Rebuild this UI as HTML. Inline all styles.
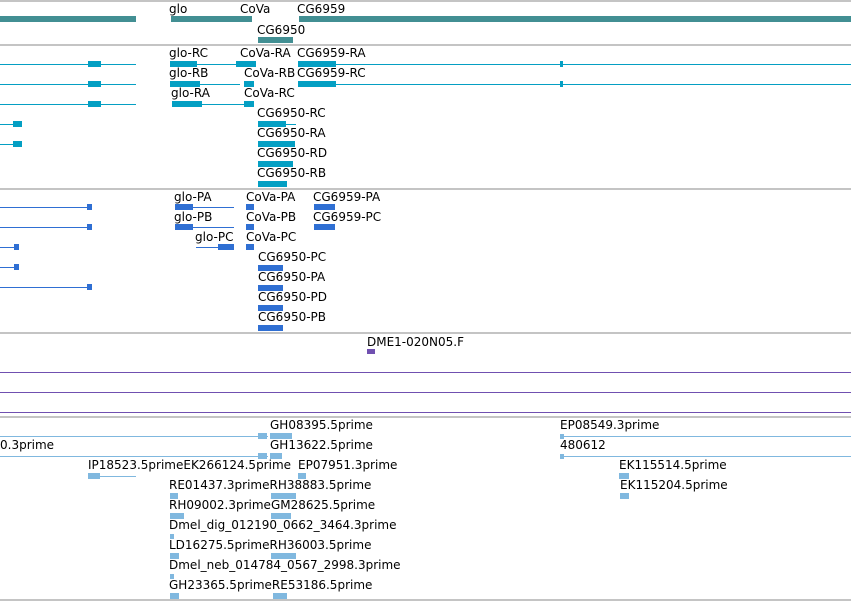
<!DOCTYPE html>
<html><head><meta charset="utf-8"><style>
body{margin:0;width:851px;height:601px;background:#fff;position:relative;overflow:hidden;font-family:"DejaVu Sans","Liberation Sans",sans-serif;font-size:12px;color:#000}
div{position:absolute}
.s{left:0;width:851px;height:2px;background:#c4c4c4}
.p{left:0;width:851px;height:1px;background:#7050b0}
.t{line-height:14px;white-space:nowrap}
.a{background:#428f93}
.c{background:#049fc3}
.d{background:#2f6fd3}
.e{background:#80b8df}
</style></head><body>
<div class="s" style="top:0"></div>
<div class="s" style="top:44px"></div>
<div class="s" style="top:188px"></div>
<div class="s" style="top:332px"></div>
<div class="s" style="top:416px"></div>
<div class="s" style="top:599px"></div>
<div class="p" style="top:372px"></div>
<div class="p" style="top:392px"></div>
<div class="p" style="top:412px"></div>

<!-- track 1 -->
<div class="t" style="left:169px;top:2px">glo</div>
<div class="t" style="left:240px;top:2px">CoVa</div>
<div class="t" style="left:297px;top:2px">CG6959</div>
<div class="a" style="left:0;top:16px;width:136px;height:6px"></div>
<div class="a" style="left:171px;top:16px;width:81px;height:6px"></div>
<div class="a" style="left:299px;top:16px;width:552px;height:6px"></div>
<div class="t" style="left:257px;top:23px">CG6950</div>
<div class="a" style="left:258px;top:37px;width:35px;height:6px"></div>

<!-- track 2 -->
<div class="t" style="left:169px;top:46px">glo-RC</div>
<div class="t" style="left:240px;top:46px">CoVa-RA</div>
<div class="t" style="left:297px;top:46px">CG6959-RA</div>
<div class="t" style="left:169px;top:66px">glo-RB</div>
<div class="t" style="left:244px;top:66px">CoVa-RB</div>
<div class="t" style="left:297px;top:66px">CG6959-RC</div>
<div class="t" style="left:171px;top:86px">glo-RA</div>
<div class="t" style="left:244px;top:86px">CoVa-RC</div>
<div class="c" style="left:0;top:64px;width:136px;height:1px"></div>
<div class="c" style="left:0;top:84px;width:136px;height:1px"></div>
<div class="c" style="left:0;top:104px;width:136px;height:1px"></div>
<div class="c" style="left:88px;top:61px;width:13px;height:6px"></div>
<div class="c" style="left:88px;top:81px;width:13px;height:6px"></div>
<div class="c" style="left:88px;top:101px;width:13px;height:6px"></div>
<div class="c" style="left:170px;top:64px;width:86px;height:1px"></div>
<div class="c" style="left:170px;top:61px;width:27px;height:6px"></div>
<div class="c" style="left:236px;top:61px;width:20px;height:6px"></div>
<div class="c" style="left:170px;top:84px;width:70px;height:1px"></div>
<div class="c" style="left:170px;top:81px;width:30px;height:6px"></div>
<div class="c" style="left:244px;top:81px;width:10px;height:6px"></div>
<div class="c" style="left:172px;top:104px;width:82px;height:1px"></div>
<div class="c" style="left:172px;top:101px;width:30px;height:6px"></div>
<div class="c" style="left:244px;top:101px;width:10px;height:6px"></div>
<div class="c" style="left:298px;top:64px;width:553px;height:1px"></div>
<div class="c" style="left:298px;top:61px;width:38px;height:6px"></div>
<div class="c" style="left:298px;top:84px;width:553px;height:1px"></div>
<div class="c" style="left:298px;top:81px;width:38px;height:6px"></div>
<div class="c" style="left:560px;top:61px;width:3px;height:6px"></div>
<div class="c" style="left:560px;top:81px;width:3px;height:6px"></div>
<div class="c" style="left:0;top:124px;width:22px;height:1px"></div>
<div class="c" style="left:13px;top:121px;width:9px;height:6px"></div>
<div class="c" style="left:0;top:144px;width:22px;height:1px"></div>
<div class="c" style="left:13px;top:141px;width:9px;height:6px"></div>
<div class="t" style="left:257px;top:106px">CG6950-RC</div>
<div class="t" style="left:257px;top:126px">CG6950-RA</div>
<div class="t" style="left:257px;top:146px">CG6950-RD</div>
<div class="t" style="left:257px;top:166px">CG6950-RB</div>
<div class="c" style="left:258px;top:124px;width:38px;height:1px"></div>
<div class="c" style="left:258px;top:121px;width:28px;height:6px"></div>
<div class="c" style="left:258px;top:141px;width:37px;height:6px"></div>
<div class="c" style="left:258px;top:161px;width:35px;height:6px"></div>
<div class="c" style="left:258px;top:181px;width:29px;height:6px"></div>

<!-- track 3 -->
<div class="t" style="left:174px;top:190px">glo-PA</div>
<div class="t" style="left:246px;top:190px">CoVa-PA</div>
<div class="t" style="left:313px;top:190px">CG6959-PA</div>
<div class="t" style="left:174px;top:210px">glo-PB</div>
<div class="t" style="left:246px;top:210px">CoVa-PB</div>
<div class="t" style="left:313px;top:210px">CG6959-PC</div>
<div class="t" style="left:195px;top:230px">glo-PC</div>
<div class="t" style="left:246px;top:230px">CoVa-PC</div>
<div class="d" style="left:0;top:207px;width:92px;height:1px"></div>
<div class="d" style="left:0;top:227px;width:92px;height:1px"></div>
<div class="d" style="left:0;top:287px;width:92px;height:1px"></div>
<div class="d" style="left:0;top:247px;width:19px;height:1px"></div>
<div class="d" style="left:0;top:267px;width:19px;height:1px"></div>
<div class="d" style="left:87px;top:204px;width:5px;height:6px"></div>
<div class="d" style="left:87px;top:224px;width:5px;height:6px"></div>
<div class="d" style="left:87px;top:284px;width:5px;height:6px"></div>
<div class="d" style="left:14px;top:244px;width:5px;height:6px"></div>
<div class="d" style="left:14px;top:264px;width:5px;height:6px"></div>
<div class="d" style="left:175px;top:207px;width:59px;height:1px"></div>
<div class="d" style="left:175px;top:204px;width:18px;height:6px"></div>
<div class="d" style="left:175px;top:227px;width:59px;height:1px"></div>
<div class="d" style="left:175px;top:224px;width:18px;height:6px"></div>
<div class="d" style="left:196px;top:247px;width:38px;height:1px"></div>
<div class="d" style="left:218px;top:244px;width:16px;height:6px"></div>
<div class="d" style="left:246px;top:204px;width:8px;height:6px"></div>
<div class="d" style="left:246px;top:224px;width:8px;height:6px"></div>
<div class="d" style="left:246px;top:244px;width:8px;height:6px"></div>
<div class="d" style="left:314px;top:204px;width:21px;height:6px"></div>
<div class="d" style="left:314px;top:224px;width:21px;height:6px"></div>
<div class="t" style="left:258px;top:250px">CG6950-PC</div>
<div class="t" style="left:258px;top:270px">CG6950-PA</div>
<div class="t" style="left:258px;top:290px">CG6950-PD</div>
<div class="t" style="left:258px;top:310px">CG6950-PB</div>
<div class="d" style="left:258px;top:265px;width:25px;height:6px"></div>
<div class="d" style="left:258px;top:285px;width:25px;height:6px"></div>
<div class="d" style="left:258px;top:305px;width:25px;height:6px"></div>
<div class="d" style="left:258px;top:325px;width:25px;height:6px"></div>

<!-- track 4 -->
<div class="t" style="left:367px;top:335px">DME1-020N05.F</div>
<div style="left:367px;top:349px;width:8px;height:5px;background:#7050b0"></div>

<!-- ESTs -->
<div class="e" style="left:0;top:436px;width:268px;height:1px"></div>
<div class="e" style="left:258px;top:433px;width:9px;height:6px"></div>
<div class="e" style="left:0;top:456px;width:268px;height:1px"></div>
<div class="e" style="left:258px;top:453px;width:9px;height:6px"></div>
<div class="t" style="left:0;top:438px">0.3prime</div>
<div class="t" style="left:270px;top:418px">GH08395.5prime</div>
<div class="e" style="left:270px;top:433px;width:22px;height:6px"></div>
<div class="t" style="left:270px;top:438px">GH13622.5prime</div>
<div class="e" style="left:270px;top:453px;width:12px;height:6px"></div>
<div class="t" style="left:88px;top:458px">IP18523.5primeEK266124.5prime</div>
<div class="e" style="left:88px;top:476px;width:48px;height:1px"></div>
<div class="e" style="left:88px;top:473px;width:12px;height:6px"></div>
<div class="t" style="left:298px;top:458px">EP07951.3prime</div>
<div class="e" style="left:298px;top:473px;width:8px;height:6px"></div>
<div class="t" style="left:169px;top:478px">RE01437.3primeRH38883.5prime</div>
<div class="e" style="left:170px;top:493px;width:8px;height:6px"></div>
<div class="e" style="left:271px;top:493px;width:25px;height:6px"></div>
<div class="t" style="left:169px;top:498px">RH09002.3primeGM28625.5prime</div>
<div class="e" style="left:170px;top:513px;width:14px;height:6px"></div>
<div class="e" style="left:271px;top:513px;width:20px;height:6px"></div>
<div class="t" style="left:169px;top:518px">Dmel_dig_012190_0662_3464.3prime</div>
<div class="e" style="left:170px;top:534px;width:4px;height:5px"></div>
<div class="t" style="left:169px;top:538px">LD16275.5primeRH36003.5prime</div>
<div class="e" style="left:170px;top:553px;width:9px;height:6px"></div>
<div class="e" style="left:271px;top:553px;width:25px;height:6px"></div>
<div class="t" style="left:169px;top:558px">Dmel_neb_014784_0567_2998.3prime</div>
<div class="e" style="left:170px;top:574px;width:4px;height:5px"></div>
<div class="t" style="left:169px;top:578px">GH23365.5primeRE53186.5prime</div>
<div class="e" style="left:170px;top:593px;width:9px;height:6px"></div>
<div class="e" style="left:273px;top:593px;width:14px;height:6px"></div>
<div class="t" style="left:560px;top:418px">EP08549.3prime</div>
<div class="e" style="left:560px;top:436px;width:291px;height:1px"></div>
<div class="e" style="left:560px;top:434px;width:4px;height:5px"></div>
<div class="t" style="left:560px;top:438px">480612</div>
<div class="e" style="left:560px;top:456px;width:291px;height:1px"></div>
<div class="e" style="left:560px;top:454px;width:4px;height:5px"></div>
<div class="t" style="left:619px;top:458px">EK115514.5prime</div>
<div class="e" style="left:619px;top:473px;width:10px;height:6px"></div>
<div class="t" style="left:620px;top:478px">EK115204.5prime</div>
<div class="e" style="left:620px;top:493px;width:9px;height:6px"></div>
</body></html>
